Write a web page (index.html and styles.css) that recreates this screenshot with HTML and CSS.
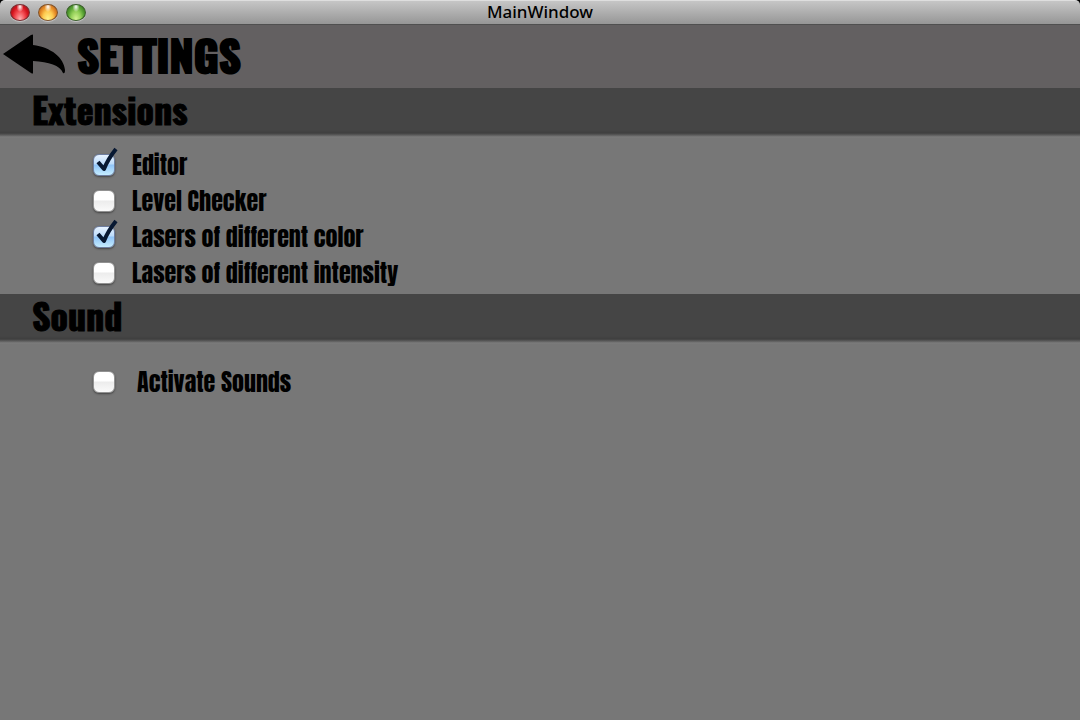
FILE: index.html
```html
<!DOCTYPE html>
<html lang="en">
<head>
<meta charset="utf-8">
<meta name="viewport" content="width=device-width, initial-scale=1">
<title>MainWindow</title>
<link rel="stylesheet" href="styles.css">
</head>
<body>
<div class="window">
  <header class="titlebar">
    <div class="lights">
      <button class="light light-close" type="button" aria-label="Close"></button>
      <button class="light light-minimize" type="button" aria-label="Minimize"></button>
      <button class="light light-zoom" type="button" aria-label="Zoom"></button>
    </div>
    <span class="window-title">MainWindow</span>
  </header>
  <main class="content">
    <div class="page-head">
      <button class="back" type="button" aria-label="Back">
        <svg width="62" height="40" viewBox="0 0 62 40" aria-hidden="true">
          <path d="M0 20 L28 1 Q30 0 30 1 V11 C48 13 61 24 62 36 Q62 40 60 39 C57 31 46 28 30 27 V39 Q30 40 28 39 Z"/>
        </svg>
      </button>
      <h1 class="page-title">SETTINGS</h1>
    </div>
    <section>
      <h2 class="section-title">Extensions</h2>
      <div class="options">
        <label class="option"><span class="check"><input class="box" type="checkbox" checked><svg class="tick" viewBox="0 0 26 28" aria-hidden="true"><path d="M5 14 L11 21 Q15 11 23 1"/></svg></span>Editor</label>
        <label class="option"><span class="check"><input class="box" type="checkbox"><svg class="tick" viewBox="0 0 26 28" aria-hidden="true"><path d="M5 14 L11 21 Q15 11 23 1"/></svg></span>Level Checker</label>
        <label class="option"><span class="check"><input class="box" type="checkbox" checked><svg class="tick" viewBox="0 0 26 28" aria-hidden="true"><path d="M5 14 L11 21 Q15 11 23 1"/></svg></span>Lasers of different color</label>
        <label class="option"><span class="check"><input class="box" type="checkbox"><svg class="tick" viewBox="0 0 26 28" aria-hidden="true"><path d="M5 14 L11 21 Q15 11 23 1"/></svg></span>Lasers of different intensity</label>
      </div>
    </section>
    <section>
      <h2 class="section-title">Sound</h2>
      <div class="options options-sound">
        <label class="option"><span class="check"><input class="box" type="checkbox"><svg class="tick" viewBox="0 0 26 28" aria-hidden="true"><path d="M5 14 L11 21 Q15 11 23 1"/></svg></span>Activate Sounds</label>
      </div>
    </section>
  </main>
</div>
</body>
</html>
```

FILE: styles.css
```css
* { box-sizing: border-box; }

body {
  margin: 0;
  background: #000;
  color: #000;
  font-family: Impact, Anton, "Roboto Condensed", "Liberation Sans", sans-serif;
  font-weight: 400;
}

.window {
  display: flex;
  flex-direction: column;
  min-height: 100vh;
}

.titlebar {
  display: grid;
  grid-template-columns: 1fr auto 1fr;
  align-items: center;
  height: 25px;
  padding: 0 10px;
  border-top: 1px solid #dedede;
  border-bottom: 1px solid #505050;
  border-radius: 5px 5px 0 0;
  background: linear-gradient(#c6c6c6, #969696);
}

.lights {
  display: flex;
  gap: 8px;
}

.light {
  width: 20px;
  height: 17px;
  padding: 0;
  border: 1px solid #555;
  border-radius: 50%;
  box-shadow: 0 1px 1px #c8c8c8;
}

.light-close {
  border-color: #7a3034;
  background: radial-gradient(ellipse at 50% 12%, #fff 0, #ffffff00 28%), radial-gradient(ellipse at 50% 95%, #ffb0b0 0, #f24a50 40%, #d5151e 65%, #8a1015 100%);
}

.light-minimize {
  border-color: #80522a;
  background: radial-gradient(ellipse at 50% 12%, #fff 0, #ffffff00 28%), radial-gradient(ellipse at 50% 95%, #fff58c 0, #fdc94f 40%, #e58a27 65%, #9a4d10 100%);
}

.light-zoom {
  border-color: #3b602b;
  background: radial-gradient(ellipse at 50% 12%, #fff 0, #ffffff00 28%), radial-gradient(ellipse at 50% 95%, #d5f593 0, #91ce57 40%, #56a033 65%, #285c15 100%);
}

.window-title {
  font: 500 17px/20px "Noto Sans", "Open Sans", sans-serif;
  padding-bottom: 2px;
}

.content {
  flex: 1;
  background: #777;
}

.page-head {
  display: flex;
  align-items: center;
  gap: 12px;
  height: 63px;
  padding: 0 3px 5px;
  background: #636061;
}

.back {
  display: flex;
  padding: 0;
  border: 0;
  background: none;
}

.page-title,
.section-title {
  margin: 0;
  font-family: Oswald, "Roboto Condensed", "Liberation Sans", sans-serif;
  font-weight: 700;
}

.page-title {
  font-size: 43px;
  line-height: 56px;
  -webkit-text-stroke: 2px #000;
}

.section-title {
  height: 50px;
  padding: 0 32px;
  background: linear-gradient(#454545 0 42px, #3f3f3f 45px, #5a5a5a 47px, #7c7c7c 49px, #777);
  font-size: 36px;
  line-height: 42px;
  -webkit-text-stroke: 1px #000;
}

.options {
  display: flex;
  flex-direction: column;
  align-items: flex-start;
  padding: 9px 93px 3px;
}

.options-sound {
  padding-top: 20px;
}

.option {
  display: flex;
  align-items: center;
  gap: 17px;
  height: 36px;
  font-size: 24px;
  line-height: 38px;
}

.options-sound .option {
  gap: 22px;
}

.check {
  position: relative;
  display: flex;
}

.box {
  appearance: none;
  width: 22px;
  height: 22px;
  margin: 0;
  border: 1px solid #929292;
  border-radius: 6px;
  background: linear-gradient(#fff 0 45%, #ececec 50%, #fafafa);
  box-shadow: 0 1px 2px #444;
}

.box:checked {
  border-color: #6e7ea0;
  background: linear-gradient(#e6f2ff 0, #bddcfb 45%, #8fc4f8 50%, #c5edff);
}

.tick {
  position: absolute;
  left: 0;
  bottom: 0;
  width: 26px;
  height: 28px;
  overflow: visible;
  fill: none;
  stroke: #071832;
  stroke-width: 4;
  stroke-linejoin: round;
  visibility: hidden;
  pointer-events: none;
}

.box:checked + .tick { visibility: visible; }
```
